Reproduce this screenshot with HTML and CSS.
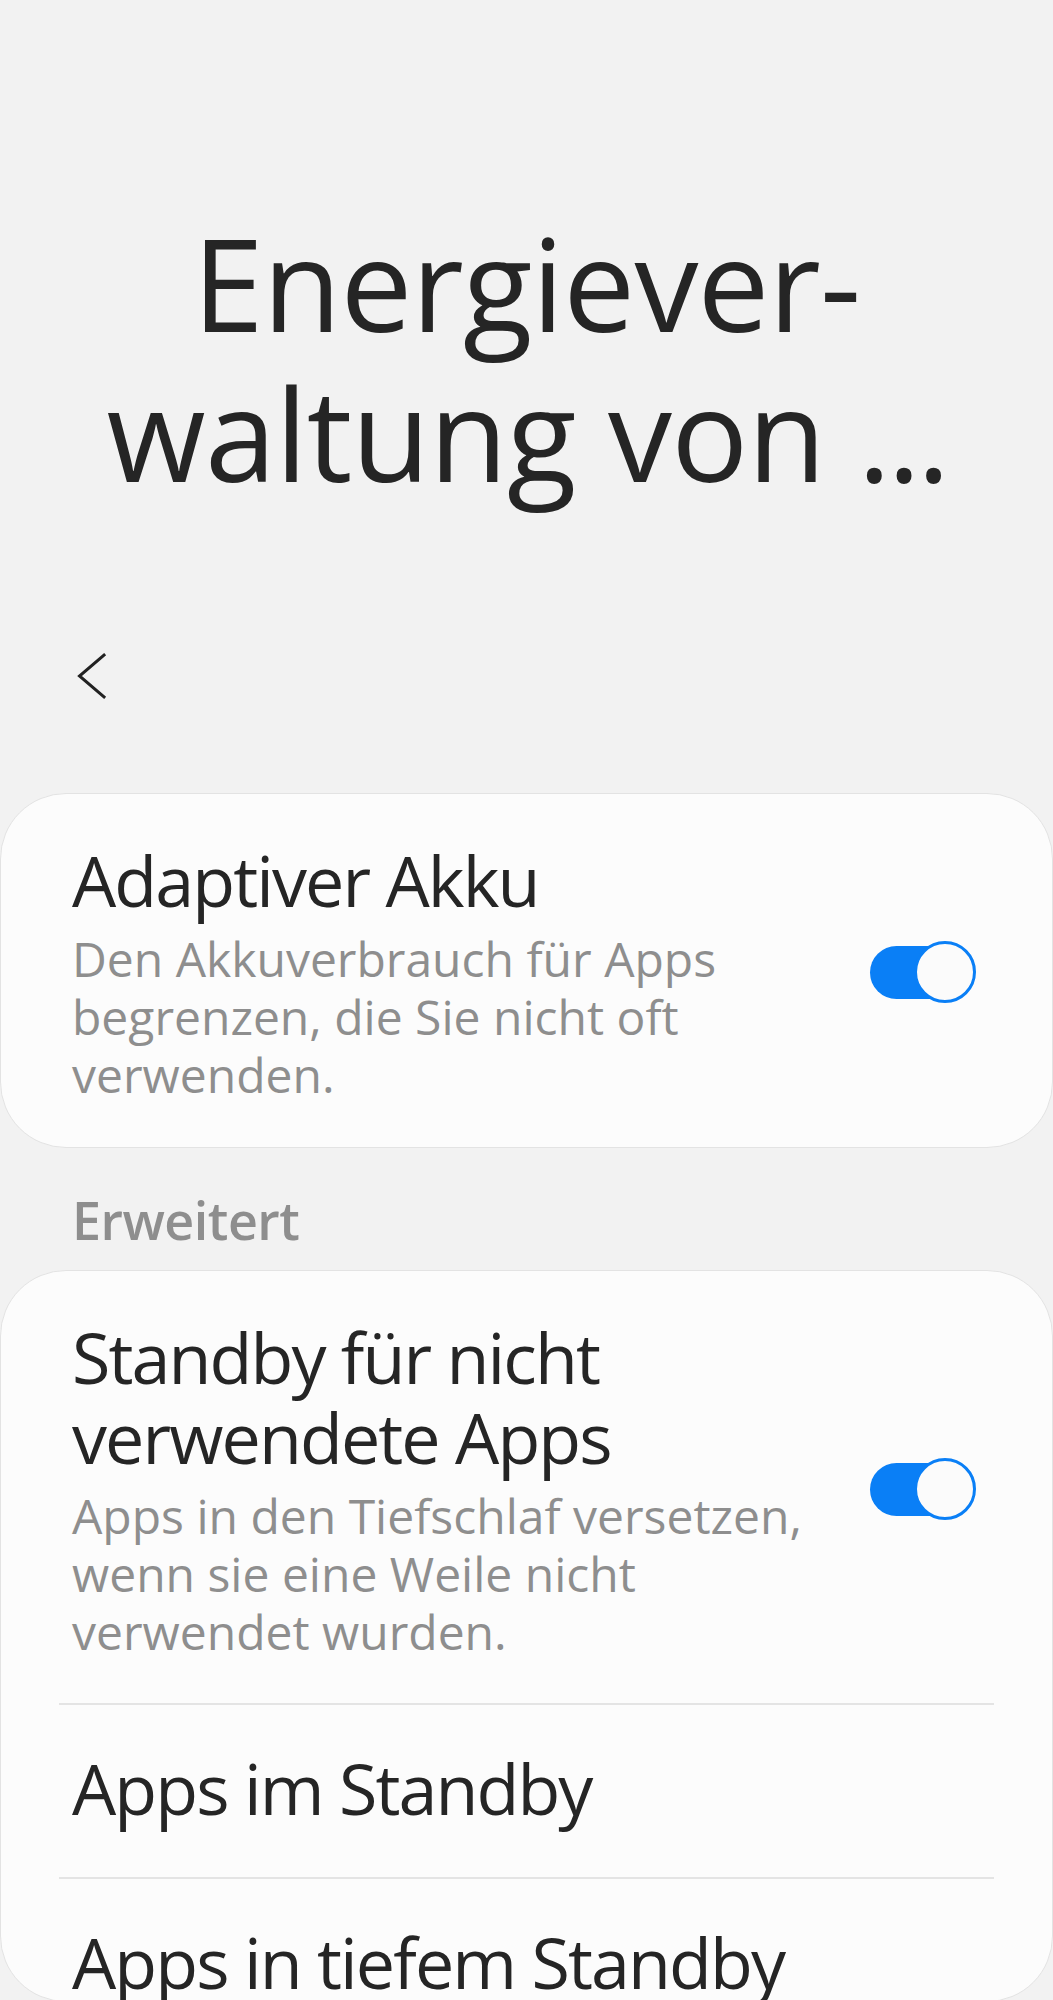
FILE: index.html
```html
<!DOCTYPE html>
<html>
<head>
	<meta charset="utf-8"/>
	<title>Energieverwaltung von Apps</title>
	<meta name="viewport" content="width=device-width,initial-scale=1">
	<link rel="stylesheet" href="styles.css">
</head>
<body>
	<div class="head">
		<h1 class="title">Energiever-<br>waltung von <span class="dots">...</span></h1>
	</div>
	<div class="nav">
		<svg class="back" width="40" height="56" viewBox="0 0 40 56"><path d="M32 7 L7.5 28 L32 49" fill="none" stroke="#222" stroke-width="3" stroke-linecap="square"/></svg>
	</div>
	<div class="card">
		<div class="item">
			<div class="text">
				<div class="name">Adaptiver Akku</div>
				<div class="desc">Den Akkuverbrauch für Apps begrenzen, die Sie nicht oft verwenden.</div>
			</div>
			<div class="switch"><span class="knob"></span></div>
		</div>
	</div>
	<div class="label">Erweitert</div>
	<div class="card last">
		<div class="item">
			<div class="text">
				<div class="name">Standby für nicht verwendete Apps</div>
				<div class="desc">Apps in den Tiefschlaf versetzen, wenn sie eine Weile nicht verwendet wurden.</div>
			</div>
			<div class="switch"><span class="knob"></span></div>
		</div>
		<div class="line"></div>
		<div class="row">Apps im Standby</div>
		<div class="line"></div>
		<div class="row">Apps in tiefem Standby</div>
	</div>
</body>
</html>
```

FILE: styles.css
```css
html, body{margin: 0;}
body{background-color: #f2f2f2; font-family: "Open Sans", "Noto Sans", sans-serif; color: #252525;}

.head{padding-top: 208px;}
.title{margin: 0; font-size: 128px; font-weight: 400; line-height: 150px; text-align: center; letter-spacing: -0.8px;}
.dots{letter-spacing: -4px;}

.nav{margin-top: 140px; height: 56px; padding-left: 72px; display: flex; align-items: center;}
.back{display: block;}

.card{margin-top: 89px; background-color: #fcfcfc; border: 1px solid #e3e3e3; border-radius: 66px; overflow: hidden;}
.card.last{margin-top: 0; height: 732px; box-sizing: border-box;}

.item{display: flex; align-items: center; gap: 30px; padding: 46px 76px 43px 71px;}
.card.last .item{padding-bottom: 42px;}
.text{flex: 1;}
.name{font-size: 70px; line-height: 80px; letter-spacing: -1.9px;}
.desc{margin-top: 10px; font-size: 48px; line-height: 58px; letter-spacing: 0; color: #8e8e8e;}

.switch{position: relative; width: 106px; height: 63px; flex-shrink: 0;}
.switch::before{content: ""; position: absolute; left: 0; top: 5px; width: 92px; height: 53px; border-radius: 27px; background-color: #0a7ff6;}
.knob{position: absolute; right: 0; top: 0; width: 62px; height: 62px; box-sizing: border-box; border: 3px solid #0a7ff6; border-radius: 50%; background-color: #fbfbfb;}

.label{margin: 37px 0 15px; padding-left: 72px; font-size: 52px; line-height: 70px; font-weight: 600; color: #8e8e8e; letter-spacing: -0.5px;}

.line{height: 2px; margin: 0 58px; background-color: #e4e4e4;}
.row{padding: 43px 71px 49px; font-size: 70px; line-height: 80px; letter-spacing: -1.9px;}
```
